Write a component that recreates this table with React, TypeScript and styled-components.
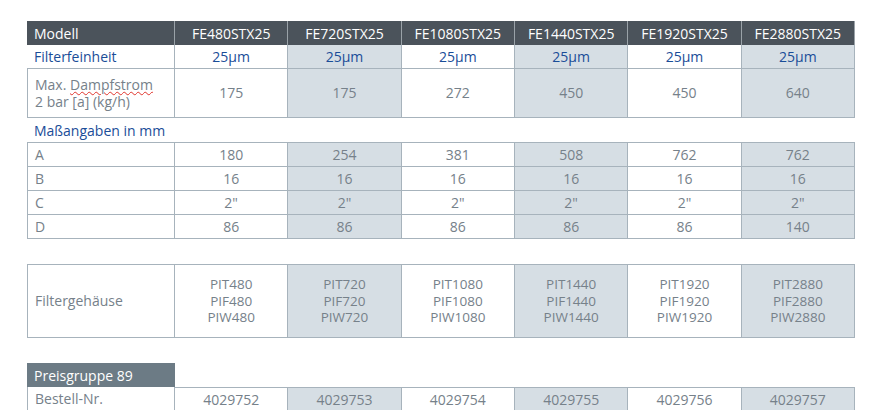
import { Fragment } from "react";
import styled, { createGlobalStyle, css } from "styled-components";

const GlobalStyle = createGlobalStyle`
  body {
    margin: 0;
    background: #ffffff;
    font-family: "Open Sans", "Noto Sans", sans-serif;
  }
`;

// palette
const BORDER = "#a7b3bc";
const SHADE = "#d6dee4";
const TEXT = "#76818a";
const BLUE = "#1a4d98";

const models = ["480", "720", "1080", "1440", "1920", "2880"];
const steam = ["175", "175", "272", "450", "450", "640"];
const dims: { label: string; values: string[] }[] = [
  { label: "A", values: ["180", "254", "381", "508", "762", "762"] },
  { label: "B", values: ["16", "16", "16", "16", "16", "16"] },
  { label: "C", values: ['2"', '2"', '2"', '2"', '2"', '2"'] },
  { label: "D", values: ["86", "86", "86", "86", "86", "140"] },
];
const orderNumbers = ["4029752", "4029753", "4029754", "4029755", "4029756", "4029757"];

// components
const Page = styled.div`
  padding: 21px 0 0 27px;
  font-size: 14px;
  color: ${TEXT};
`;

const Grid = styled.div<{ $top?: boolean }>`
  display: grid;
  grid-template-columns: 148px repeat(6, 1fr);
  width: 828px;
  ${(p) =>
    p.$top &&
    css`
      border-top: 1px solid ${BORDER};
    `}
`;

const Cell = styled.div<{
  $shade?: boolean;
  $label?: boolean;
  $h?: number;
  $noLeft?: boolean;
}>`
  box-sizing: border-box;
  height: ${(p) => p.$h ?? 24}px;
  display: flex;
  flex-direction: column;
  justify-content: center;
  align-items: ${(p) => (p.$label ? "flex-start" : "center")};
  text-align: ${(p) => (p.$label ? "left" : "center")};
  padding: ${(p) => (p.$label ? "0 0 0 7px" : "0")};
  background: ${(p) => (p.$shade ? SHADE : "transparent")};
  border-right: 1px solid ${BORDER};
  border-bottom: 1px solid ${BORDER};
  ${(p) =>
    p.$label &&
    !p.$noLeft &&
    css`
      border-left: 1px solid ${BORDER};
    `}
  line-height: 16px;
  white-space: nowrap;
`;

const HeadCell = styled.div<{ $label?: boolean }>`
  box-sizing: border-box;
  height: 24px;
  display: flex;
  align-items: center;
  justify-content: ${(p) => (p.$label ? "flex-start" : "center")};
  padding-left: ${(p) => (p.$label ? "7px" : "0")};
  background: #4b535b;
  color: #ffffff;
  border-right: 1px solid #9aa2a8;
  &:last-child {
    border-right: none;
  }
`;

const FineCell = styled(Cell)`
  color: ${BLUE};
  &:last-child {
    border-right: none;
  }
`;

const SectionLabel = styled.div`
  height: 24px;
  display: flex;
  align-items: center;
  padding-left: 7px;
  color: ${BLUE};
`;

const TwoLines = styled.div`
  line-height: 17px;
`;

const Spell = styled.span`
  text-decoration: underline wavy #e0342c;
  text-decoration-thickness: 1px;
  text-underline-offset: 1px;
`;

const Spacer = styled.div<{ $h: number }>`
  height: ${(p) => p.$h}px;
`;

const Lines = styled.div`
  font-size: 13.5px;
  line-height: 16.5px;
`;

const PriceHead = styled.div`
  box-sizing: border-box;
  width: 148px;
  height: 24px;
  display: flex;
  align-items: center;
  padding-left: 7px;
  background: #6c7b85;
  color: #ffffff;
`;

const OrderCell = styled(Cell)<{ $first?: boolean }>`
  border-bottom: none;
  ${(p) =>
    !p.$first &&
    css`
      border-top: 1px solid ${BORDER};
    `}
`;

const App = () => {
  return (
    <>
      <GlobalStyle />
      <Page>
        <Grid>
          <HeadCell $label>Modell</HeadCell>
          {models.map((m) => (
            <HeadCell key={m}>FE{m}STX25</HeadCell>
          ))}

          <FineCell $label $noLeft>
            Filterfeinheit
          </FineCell>
          {models.map((m, i) => (
            <FineCell key={m} $shade={i % 2 === 1}>
              25µm
            </FineCell>
          ))}

          <Cell $label $h={49}>
            <TwoLines>
              Max. <Spell>Dampfstrom</Spell>
              <br />2 bar [a] (kg/h)
            </TwoLines>
          </Cell>
          {steam.map((v, i) => (
            <Cell key={i} $h={49} $shade={i % 2 === 1}>
              {v}
            </Cell>
          ))}
        </Grid>

        <SectionLabel>Maßangaben in mm</SectionLabel>

        <Grid $top>
          {dims.map((row) => (
            <Fragment key={row.label}>
              <Cell $label>{row.label}</Cell>
              {row.values.map((v, i) => (
                <Cell key={i} $shade={i % 2 === 1}>
                  {v}
                </Cell>
              ))}
            </Fragment>
          ))}
        </Grid>

        <Spacer $h={25} />

        <Grid $top>
          <Cell $label $h={73}>
            Filtergehäuse
          </Cell>
          {models.map((m, i) => (
            <Cell key={m} $h={73} $shade={i % 2 === 1}>
              <Lines>
                PIT{m}
                <br />
                PIF{m}
                <br />
                PIW{m}
              </Lines>
            </Cell>
          ))}
        </Grid>

        <Spacer $h={25} />

        <PriceHead>Preisgruppe 89</PriceHead>
        <Grid>
          <OrderCell $label $first>
            Bestell-Nr.
          </OrderCell>
          {orderNumbers.map((n, i) => (
            <OrderCell key={n} $shade={i % 2 === 1}>
              {n}
            </OrderCell>
          ))}
        </Grid>
      </Page>
    </>
  );
};

export default App;
